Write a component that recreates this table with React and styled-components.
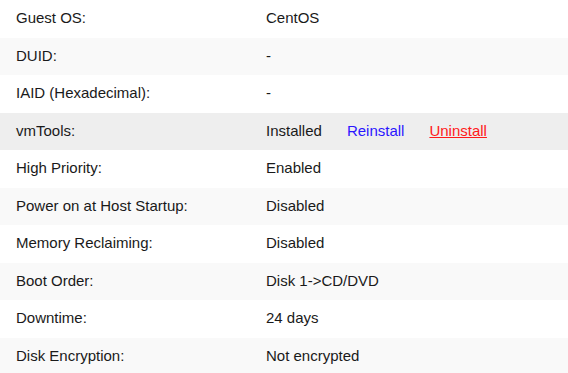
import React from "react";
import styled, { createGlobalStyle } from "styled-components";

const Global = createGlobalStyle`
  html, body { margin: 0; padding: 0; background: #fff; }
  body { font-family: "Liberation Sans", Arial, sans-serif; }
`;

const Table = styled.div`
  width: 568px;
  display: flex;
  flex-direction: column;
`;

const Row = styled.div`
  display: grid;
  grid-template-columns: 250px 1fr;
  height: 37.5px;
  align-items: center;
  padding-left: 16px;
  padding-bottom: 2px;
  box-sizing: border-box;
  background: ${(p) => (p.$hover ? "#eeeeee" : p.$alt ? "#f9f9f9" : "#ffffff")};
  font-size: 15px;
  color: #1a1a1a;
`;

const Label = styled.span``;

const Value = styled.span`
  display: flex;
  align-items: center;
  gap: 25px;
`;

const Link = styled.a`
  color: ${(p) => (p.$danger ? "#ff1a1a" : "#2a16ff")};
  text-decoration: ${(p) => (p.$danger ? "underline" : "none")};
  cursor: pointer;
`;

const rows = [
  ["Guest OS:", "CentOS"],
  ["DUID:", "-"],
  ["IAID (Hexadecimal):", "-"],
  ["vmTools:", "tools"],
  ["High Priority:", "Enabled"],
  ["Power on at Host Startup:", "Disabled"],
  ["Memory Reclaiming:", "Disabled"],
  ["Boot Order:", "Disk 1->CD/DVD"],
  ["Downtime:", "24 days"],
  ["Disk Encryption:", "Not encrypted"],
];

export default function App() {
  return (
    <>
      <Global />
      <Table>
        {rows.map(([l, v], i) => (
          <Row key={l} $alt={i % 2 === 1} $hover={i === 3}>
            <Label>{l}</Label>
            {v === "tools" ? (
              <Value>
                <span>Installed</span>
                <Link>Reinstall</Link>
                <Link $danger>Uninstall</Link>
              </Value>
            ) : (
              <Value>{v}</Value>
            )}
          </Row>
        ))}
      </Table>
    </>
  );
}
